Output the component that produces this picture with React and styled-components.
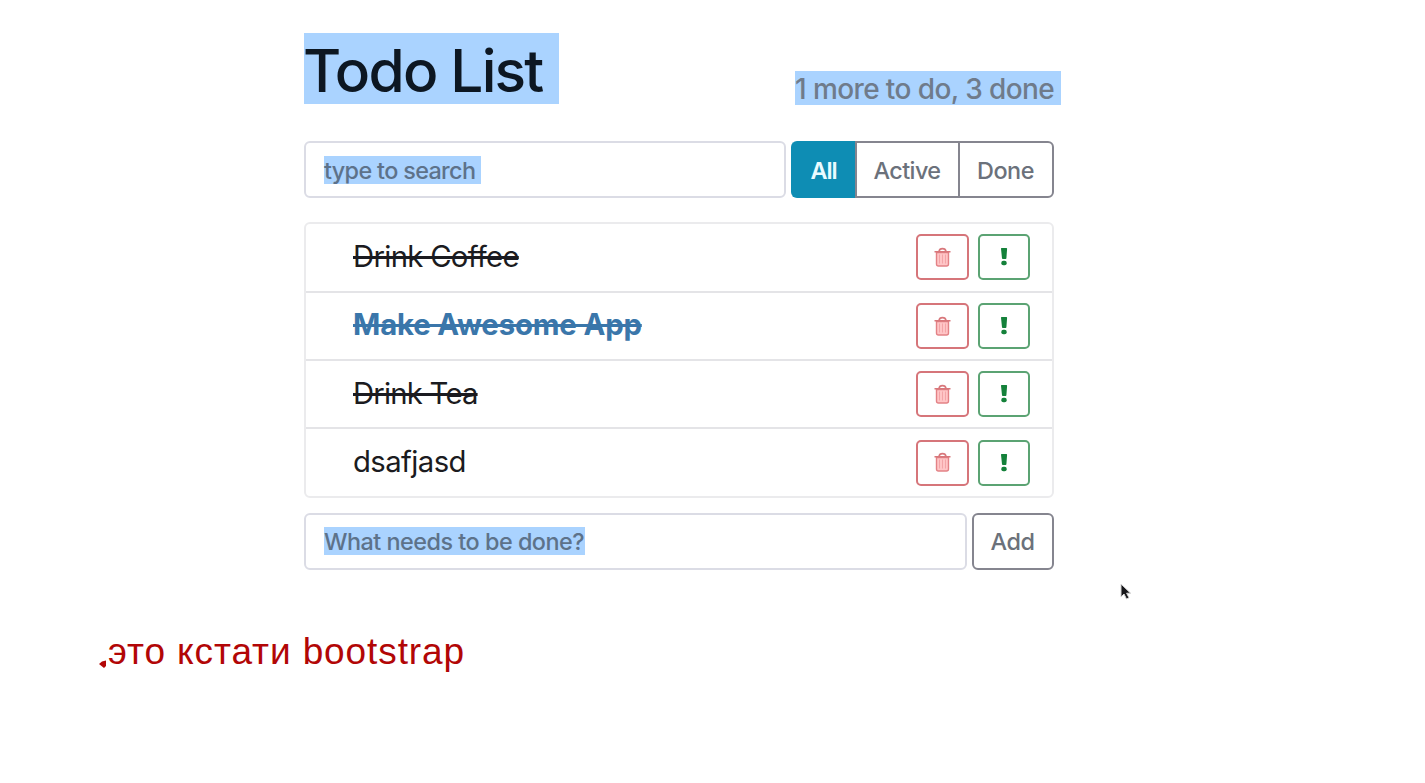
import React from 'react';
import styled, { createGlobalStyle } from 'styled-components';

const GlobalStyle = createGlobalStyle`
  *, *::before, *::after { box-sizing: border-box; }
  body {
    margin: 0;
    background: #fff;
    font-family: Inter, "Liberation Sans", sans-serif;
    font-size: 23.4px;
    color: #1b1b20;
    overflow: hidden;
  }
  h1, h2, p, ul { margin: 0; padding: 0; }
  button { font: inherit; margin: 0; }
`;

const Page = styled.main`
  position: relative;
  height: 783px;
  padding: 33px 0 0 304px;
`;

const TodoApp = styled.section`
  width: 750px;
`;

const Header = styled.header`
  display: flex;
  justify-content: space-between;
  align-items: flex-end;
  height: 72px;
`;

const Title = styled.h1`
  align-self: flex-start;
  width: 255px;
  height: 71px;
  background: #aad3ff;
  color: #0d1722;
  font-size: 58.6px;
  font-weight: 500;
  line-height: 75px;
  letter-spacing: -1.8px;
  text-indent: -1px;
  white-space: nowrap;
`;

const Summary = styled.h2`
  width: 266px;
  height: 34px;
  margin-right: -7px;
  background: #aad3ff;
  color: #6f7b8b;
  font-size: 28px;
  font-weight: 500;
  line-height: 36px;
  letter-spacing: -0.6px;
  white-space: nowrap;
`;

const Controls = styled.div`
  display: flex;
  gap: 5px;
  height: 57px;
  margin-top: ${(p) => p.$top}px;
`;

const Field = styled.div`
  flex: 1;
  display: flex;
  align-items: center;
  padding: 0 0 ${(p) => p.$lift || 0}px 18px;
  border: 2px solid #dbdce5;
  border-radius: 6px;
`;

const Placeholder = styled.span`
  width: ${(p) => p.$width}px;
  height: 28px;
  background: #aad3ff;
  color: #5d728a;
  font-weight: 450;
  line-height: 29px;
  letter-spacing: ${(p) => p.$spacing}px;
  white-space: nowrap;
`;

const Filters = styled.div`
  display: flex;
  width: 263px;
`;

const Button = styled.button`
  width: ${(p) => p.$width}px;
  padding: ${(p) => p.$drop || 0}px 1px 0 0;
  border: 2px solid #85858f;
  border-radius: 6px;
  background: #fff;
  color: #6b717b;
  font-weight: 450;
  letter-spacing: ${(p) => p.$spacing || 0}px;
`;

const FilterButton = styled(Button)`
  border-radius: 0;
  margin-left: -2px;
  &:first-child {
    margin-left: 0;
    border-color: #0e8db4;
    border-right-color: #3d7488;
    border-radius: 6px 0 0 6px;
    background: #0e8db4;
    color: #e9fbff;
    font-weight: 600;
  }
  &:last-child { border-radius: 0 6px 6px 0; }
`;

const List = styled.ul`
  display: grid;
  grid-template-rows: 69px 68px 68px 67px;
  height: 276px;
  margin-top: 24px;
  border: 2px solid #ebebed;
  border-radius: 6px;
  list-style: none;
`;

const Label = styled.span`
  flex: 1;
  padding-bottom: 2px;
  color: ${(p) => (p.$important ? '#3a76aa' : '#1b1b20')};
  font-size: 29.3px;
  font-weight: ${(p) => (p.$important ? 700 : 400)};
  letter-spacing: ${(p) => p.$spacing}px;
  line-height: 36px;
`;

const Item = styled.li`
  display: flex;
  align-items: center;
  gap: 9px;
  padding: 0 22px 0 47px;
  border-bottom: 2px solid #e4e4e7;
  &:first-child { padding-bottom: 1px; }
  &:last-child { border-bottom: 0; }
  &:nth-child(odd) ${Label} { padding-bottom: 0; }
`;

const Struck = styled.s`
  text-decoration-thickness: 3px;
`;

const IconButton = styled.button`
  display: flex;
  align-items: center;
  justify-content: center;
  width: ${(p) => (p.$danger ? 53 : 52)}px;
  height: 46px;
  padding: 0;
  border: 2px solid ${(p) => (p.$danger ? '#d6757a' : '#5ba373')};
  border-radius: 5px;
  background: #fff;
`;

const Note = styled.p`
  display: flex;
  align-items: center;
  margin: 60px 0 0 -206px;
  color: #b20606;
  font: 37px/44px "Liberation Sans", Arial, sans-serif;
  letter-spacing: 0.9px;
  white-space: nowrap;
`;

const Speck = styled.svg`
  margin: 23px 2px 0 0;
`;

const Pointer = styled.svg`
  position: absolute;
  left: 1117px;
  top: 580px;
`;

const TrashIcon = () => (
  <svg width="17" height="21" viewBox="0 0 17 21" fill="none">
    <path d="M2.500 5.500h12v11.500a2 2 0 0 1-2 2h-8a2 2 0 0 1-2-2z" fill="#ffc5c6" stroke="#e38286" strokeWidth="1.400" />
    <path d="M.5 4.800h16M5 4.400Q5.500 1.600 8.500 1.600t3.500 2.800" stroke="#d8777b" strokeWidth="1.600" />
    <path d="M5.500 7.500v9M8.500 7.500v9M11.500 7.500v9" stroke="#f3a5a8" />
  </svg>
);

const ExclamationIcon = () => (
  <svg width="8" height="20" viewBox="0 0 8 20" fill="#14813a">
    <path d="M1.600 1h4.800q.8 0 .7.800l-.7 9.400q-.1.800-.8.800H2.800q-.7 0-.8-.8L1 1.800Q.9 1 1.600 1z" />
    <rect x="1.300" y="13.800" width="5.400" height="4.500" rx="2" />
  </svg>
);

const todos = [
  { text: 'Drink Coffee', done: true, spacing: -0.7 },
  { text: 'Make Awesome App', done: true, important: true, spacing: -0.15 },
  { text: 'Drink Tea', done: true, spacing: -0.8 },
  { text: 'dsafjasd', spacing: -0.6 },
];

export default function App() {
  return (
    <Page>
      <GlobalStyle />
      <TodoApp>
        <Header>
          <Title>Todo List</Title>
          <Summary>1 more to do, 3 done</Summary>
        </Header>
        <Controls $top={36}>
          <Field>
            <Placeholder $width={157} $spacing={-0.65}>type to search</Placeholder>
          </Field>
          <Filters>
            <FilterButton $drop={2} $width={66} $spacing={-1.1}>All</FilterButton>
            <FilterButton $drop={2} $width={105} $spacing={-0.6}>Active</FilterButton>
            <FilterButton $drop={2} $width={96} $spacing={-0.5}>Done</FilterButton>
          </Filters>
        </Controls>
        <List>
          {todos.map(({ text, done, important, spacing }) => (
            <Item key={text}>
              <Label $important={important} $spacing={spacing}>
                {done ? <Struck>{text}</Struck> : text}
              </Label>
              <IconButton $danger aria-label="Delete"><TrashIcon /></IconButton>
              <IconButton aria-label="Important"><ExclamationIcon /></IconButton>
            </Item>
          ))}
        </List>
        <Controls $top={15}>
          <Field $lift={2}>
            <Placeholder $width={261} $spacing={-0.5}>What needs to be done?</Placeholder>
          </Field>
          <Button $width={82} $spacing={-0.4}>Add</Button>
        </Controls>
        <Note>
          <Speck width="8" height="8" viewBox="0 0 8 8" fill="#b20606">
            <path d="M1 4 4 1.500 8 .5V6L6 8z" />
          </Speck>
          это кстати bootstrap
        </Note>
      </TodoApp>
      <Pointer width="15" height="22" viewBox="0 0 15 22">
        <path d="M4 4v13l3-3 2.500 5 2.500-1.300-2.400-4.500h4z" fill="#17171a" stroke="#d5d5d5" />
      </Pointer>
    </Page>
  );
}
